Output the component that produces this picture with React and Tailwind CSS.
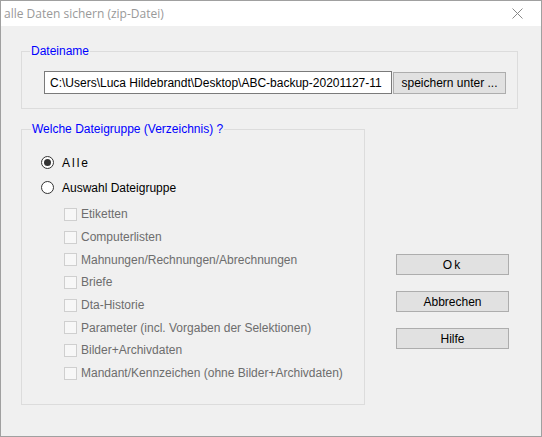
import React from "react"

const groups = [
  "Etiketten",
  "Computerlisten",
  "Mahnungen/Rechnungen/Abrechnungen",
  "Briefe",
  "Dta-Historie",
  "Parameter (incl. Vorgaben der Selektionen)",
  "Bilder+Archivdaten",
  "Mandant/Kennzeichen (ohne Bilder+Archivdaten)",
]

const Radio = ({ checked, label }) => (
  <div className="flex items-center h-[25px]">
    <span className="w-[13px] h-[13px] rounded-full border border-[#333] bg-white flex items-center justify-center">
      {checked && <span className="w-[7px] h-[7px] rounded-full bg-[#333]" />}
    </span>
    <span className="ml-[8px] text-black">{label}</span>
  </div>
)

const WinButton = ({ children, className = "" }) => (
  <button className={`h-[21px] bg-[#e1e1e1] border border-[#adadad] text-black text-[12px] leading-none ${className}`}>
    {children}
  </button>
)

export default function App() {
  return (
    <div
      className="w-[542px] h-[437px] border border-[#a0a0a0] bg-[#f0f0f0] flex flex-col overflow-hidden text-[12px]"
      style={{ fontFamily: '"Liberation Sans", Arial, sans-serif' }}
    >
      {/* title bar */}
      <div className="h-[25px] bg-white flex items-center justify-between pl-[3px] pr-[18px] shrink-0">
        <span className="text-[#999] text-[12px]" style={{ fontFamily: '"Open Sans", "Noto Sans", sans-serif' }}>
          alle Daten sichern (zip-Datei)
        </span>
        <svg width="11" height="11" viewBox="0 0 11 11" className="text-[#888]">
          <path d="M0.5 0.5 L10.5 10.5 M10.5 0.5 L0.5 10.5" stroke="currentColor" strokeWidth="1" />
        </svg>
      </div>

      <div className="flex flex-col pl-[20px] pt-[18px]">
        <fieldset className="w-[497px] h-[65px] border border-[#dcdcdc]">
          <legend className="ml-[8px] px-[1px] text-[#0000ff] leading-[14px]">Dateiname</legend>
          <div className="flex items-center pl-[22px] pt-[13px]">
            <div className="w-[348px] h-[23px] bg-white border border-[#7a7a7a] pl-[5px] flex items-center overflow-hidden whitespace-nowrap text-black">
              C:\Users\Luca Hildebrandt\Desktop\ABC-backup-20201127-11
            </div>
            <WinButton className="w-[113px] ml-[1px] h-[22px]">speichern unter ...</WinButton>
          </div>
        </fieldset>

        <div className="flex mt-[13px]">
          <fieldset className="w-[344px] h-[283px] border border-[#dcdcdc]">
            <legend className="ml-[9px] px-[1px] text-[#0000ff] leading-[14px]">
              Welche Dateigruppe (Verzeichnis) ?
            </legend>
            <div className="pl-[19px] pt-[14px]">
              <Radio checked label={<span className="tracking-[2px]">Alle</span>} />
              <Radio label="Auswahl Dateigruppe" />
              <div className="flex flex-col pl-[23px] pt-[3px]">
                {groups.map(g => (
                  <div key={g} className="flex items-center h-[22.7px]">
                    <span className="w-[13px] h-[13px] border border-[#cfcfcf] bg-[#f7f7f7]" />
                    <span className="ml-[4px] text-[#6d6d6d]">{g}</span>
                  </div>
                ))}
              </div>
            </div>
          </fieldset>

          <div className="flex flex-col ml-[31px] pt-[132px] gap-[16px]">
            <WinButton className="w-[113px] tracking-[2px]">Ok</WinButton>
            <WinButton className="w-[113px]">Abbrechen</WinButton>
            <WinButton className="w-[113px]">Hilfe</WinButton>
          </div>
        </div>
      </div>
    </div>
  )
}
